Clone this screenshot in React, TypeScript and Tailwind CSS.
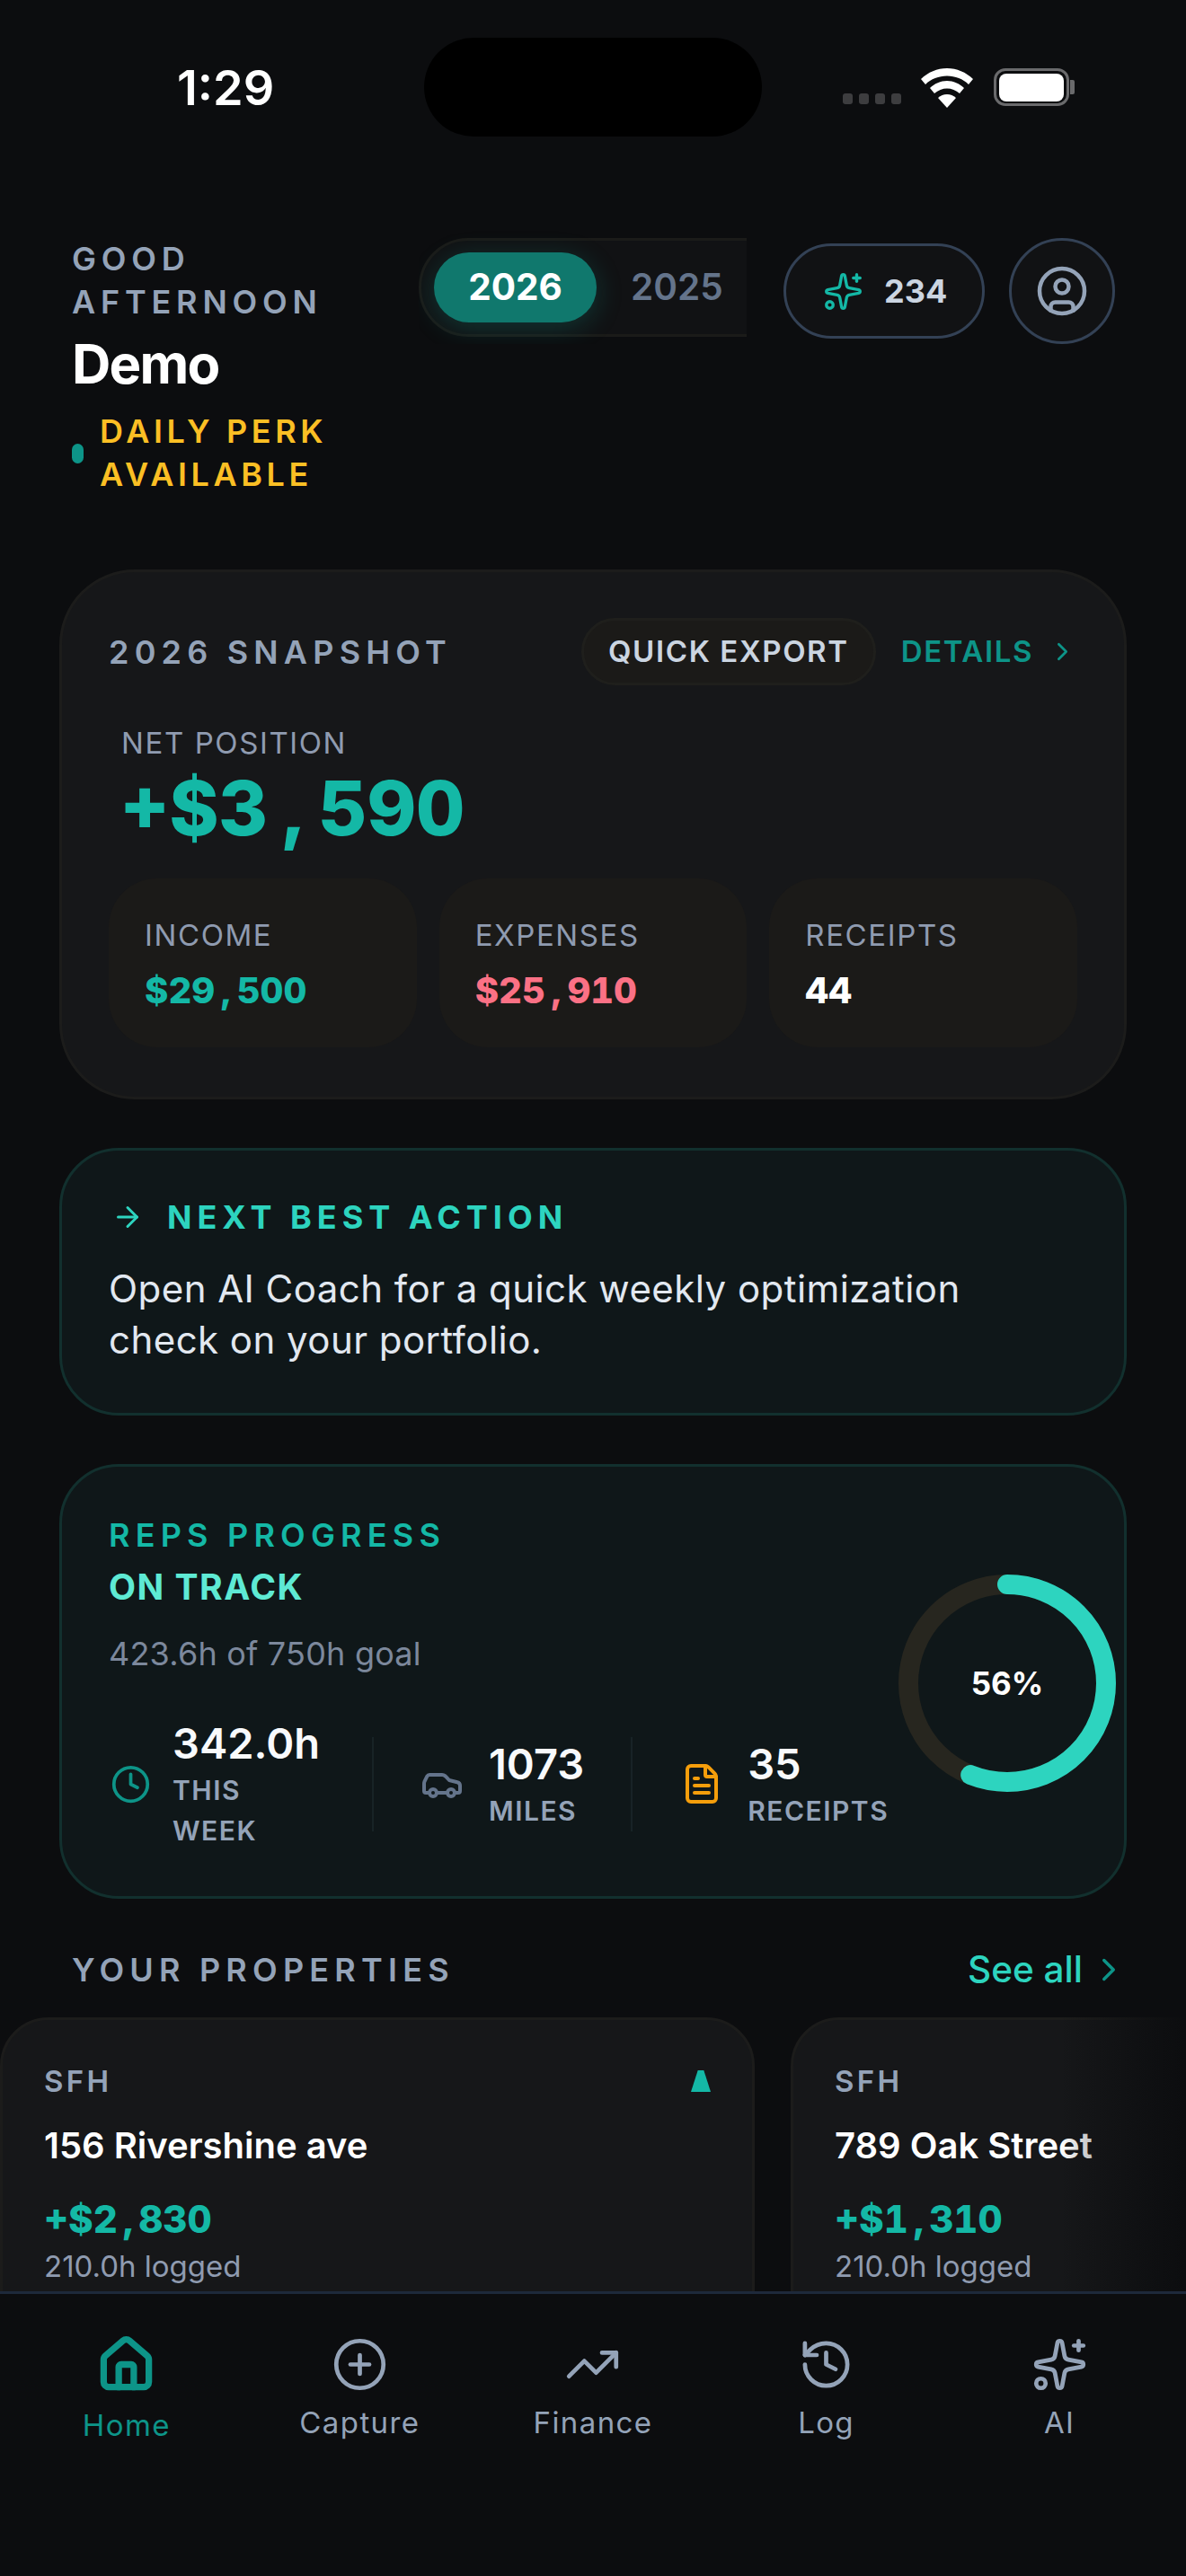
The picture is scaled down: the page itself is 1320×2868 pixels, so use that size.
import { ArrowRight, Car, ChevronRight, CirclePlus, CircleUser, Clock, FileText, History, House, Sparkles, TrendingUp } from 'lucide-react';

// amounts keep the wide comma gap from the design
function Money({ value, comma }: { value: string; comma: string }) {
  const [head, tail] = value.split(',');
  return (
    <>
      {head}
      {tail && <span className={comma}>,</span>}
      {tail}
    </>
  );
}

function StatCard({ label, value, color }: { label: string; value: string; color: string }) {
  return (
    <div className="flex-1 h-[188px] rounded-[54px] bg-[#1b1a18] pl-[40px] pt-[39px]">
      <div className="text-[33px] leading-[48px] tracking-[1.6px] text-[#8f9bb0]">{label}</div>
      <div className={`mt-[11px] text-[40px] leading-[54px] font-extrabold tabular-nums ${color}`}>
        <Money value={value} comma="mx-[7px]" />
      </div>
    </div>
  );
}

function RepStat({ icon, value, label, wide, gap }: { icon: React.ReactNode; value: string; label: string; wide?: boolean; gap: string }) {
  return (
    <div className={`flex items-center ${gap}`}>
      {icon}
      <div className={wide ? 'w-[170px]' : ''}>
        <div className="text-[47px] leading-[60px] font-semibold text-[#f8fafc]">{value}</div>
        <div className="text-[30px] leading-[45px] font-semibold tracking-[1.5px] text-[#94a3b8]">{label}</div>
      </div>
    </div>
  );
}

function PropertyCard({ name, value, arrow }: { name: string; value: string; arrow?: boolean }) {
  return (
    <div className="relative w-[840px] h-[400px] shrink-0 rounded-[54px] border-[3px] border-[#1c1c1b] bg-[#161719] px-[46px] pt-[47px]">
      <div className="flex items-center justify-between">
        <span className="text-[33px] leading-[42px] font-semibold tracking-[3.300px] text-[#94a3b8]">SFH</span>
        {arrow && <div className="h-[24px] w-[22px] bg-[#14b8a6] [clip-path:polygon(35%_0,65%_0,100%_100%,0_100%)]" />}
      </div>
      <div className="mt-[24px] text-[40px] leading-[54px] font-semibold text-white">{name}</div>
      <div className="mt-[28px] text-[42px] leading-[54px] font-extrabold tabular-nums text-[#14b8a6]">
        <Money value={value} comma="mx-[6px]" />
      </div>
      <div className="mt-[1px] text-[33px] leading-[48px] text-[#8f9bb0]">210.0h logged</div>
    </div>
  );
}

function NavItem({ icon, label, active }: { icon: React.ReactNode; label: string; active?: boolean }) {
  return (
    <div className="flex flex-1 flex-col items-center">
      <div className="flex h-[72px] items-center justify-center">{icon}</div>
      <div className={`${active ? 'mt-[8px] text-[#0d9488]' : 'mt-[5px] text-[#94a3b8]'} text-[33px] leading-[48px] tracking-[1.400px]`}>{label}</div>
    </div>
  );
}

export default function App() {
  return (
    <div className='flex h-[2868px] w-[1320px] flex-col overflow-hidden bg-[#0c0d0f] font-["Inter",sans-serif]'>
      <main className="relative flex-1 overflow-hidden">
        {/* status bar */}
        <div className="relative h-[265px]">
          <div className="absolute left-[197px] top-[64px] text-[54px] leading-[68px] font-semibold text-white">1:29</div>
          <div className="absolute left-[472px] top-[42px] h-[110px] w-[376px] rounded-[55px] bg-black" />
          <div className="absolute left-[938px] top-[104px] flex gap-[7px]">
            <div className="h-[12px] w-[11px] rounded-[3px] bg-[#3d3d3f]" />
            <div className="h-[12px] w-[11px] rounded-[3px] bg-[#3d3d3f]" />
            <div className="h-[12px] w-[11px] rounded-[3px] bg-[#3d3d3f]" />
            <div className="h-[12px] w-[11px] rounded-[3px] bg-[#3d3d3f]" />
          </div>
          <svg className="absolute left-[1025px] top-[76px]" width="58" height="44" viewBox="0 0 58 44" fill="white">
            <path d="M29 0C18 0 8 4.400 0 12l5 6C11 12 20 8.500 29 8.500S47 12 53 18l5-6C50 4.400 40 0 29 0Z" />
            <path d="M29 14c-7 0-14 3-19 8l5 6c4-3.500 9-5.500 14-5.500s10 2 14 5.500l5-6c-5-5-12-8-19-8Z" />
            <path d="M29 29c-4 0-7 1.500-10 4l10 11 10-11c-3-2.500-6-4-10-4Z" />
          </svg>
          <div className="absolute left-[1106px] top-[76px] flex items-center">
            <div className="flex h-[42px] w-[84px] items-center justify-center rounded-[13px] border-[3px] border-[#6a6a6c]">
              <div className="h-[31px] w-[72px] rounded-[8px] bg-white" />
            </div>
            <div className="ml-[1px] h-[16px] w-[5px] rounded-r-[2px] bg-[#6a6a6c]" />
          </div>
        </div>

        {/* header */}
        <div className="flex h-[369px] items-start pl-[80px]">
          <div className="w-[386px]">
            <div className="w-[320px] text-[36px] leading-[47.500px] font-semibold tracking-[5.800px] text-[#94a3b8]">GOOD AFTERNOON</div>
            <div className="mt-[9px] text-[60px] leading-[72px] font-bold tracking-[-1.800px] text-white">Demo</div>
            <div className="mt-[16px] flex items-center gap-[18px]">
              <div className="h-[22px] w-[13px] rounded-full bg-[#0d9488]" />
              <div className="w-[300px] text-[36px] leading-[47.500px] font-semibold tracking-[4.600px] text-[#fbbf24]">DAILY PERK AVAILABLE</div>
            </div>
          </div>
          <div className="w-[365px] shrink-0 overflow-hidden py-[8px] -my-[8px]">
            <div className="flex h-[110px] w-[430px] items-center rounded-full border-[3px] border-[#1b1b19] bg-[#111214] pl-[14px]">
              <div className="flex h-[78px] w-[181px] items-center justify-center rounded-[39px] bg-[#10786d] text-[40.500px] leading-none font-bold text-white shadow-[0_6px_30px_rgba(20,184,166,0.22)]">2026</div>
              <div className="ml-[38px] text-[40.500px] leading-none font-semibold text-[#64748b]">2025</div>
            </div>
          </div>
          <div className="ml-[41px] mt-[6px] flex h-[106px] w-[224px] items-center gap-[23px] rounded-full border-[3px] border-[#334155] bg-[#111214] pl-[41px]">
            <Sparkles className="h-[45px] w-[45px] text-[#14b8a6]" strokeWidth={1.8} />
            <span className="text-[36px] leading-none font-bold text-[#cbd5e1]">234</span>
          </div>
          <div className="ml-[27px] flex h-[118px] w-[118px] items-center justify-center rounded-full border-[3px] border-[#334155] bg-[#111214]">
            <CircleUser className="h-[60px] w-[60px] text-[#94a3b8]" strokeWidth={1.8} />
          </div>
        </div>

        {/* snapshot */}
        <section className="mx-[66px] h-[590px] rounded-[84px] border-[3px] border-[#1c1c1b] bg-[#161719] px-[52px] pt-[51px]">
          <div className="flex items-center">
            <span className="text-[36px] leading-[48px] font-semibold tracking-[6.200px] text-[#94a3b8]">2026 SNAPSHOT</span>
            <div className="ml-auto flex h-[75px] w-[328px] items-center justify-center rounded-full border-[3px] border-[#1f1f1c] bg-[#1b1a18] text-[33px] leading-none font-semibold tracking-[1.600px] text-[#cbd5e1]">QUICK EXPORT</div>
            <div className="ml-[28px] flex items-center gap-[16px]">
              <span className="text-[33px] leading-none font-semibold tracking-[1.600px] text-[#0d9488]">DETAILS</span>
              <ChevronRight className="h-[33px] w-[33px] text-[#0d9488]" strokeWidth={2} />
            </div>
          </div>
          <div className="ml-[14px] mt-[40px] text-[33px] leading-[48px] tracking-[1.600px] text-[#8f9bb0]">NET POSITION</div>
          <div className="ml-[13px] -mt-[1px] text-[84px] leading-[100px] font-extrabold tabular-nums text-[#14b8a6]">
            <Money value="+$3,590" comma="mx-[17px]" />
          </div>
          <div className="mt-[28px] flex gap-[25px]">
            <StatCard label="INCOME" value="$29,500" color="text-[#14b8a6]" />
            <StatCard label="EXPENSES" value="$25,910" color="text-[#fb7185]" />
            <StatCard label="RECEIPTS" value="44" color="text-white" />
          </div>
        </section>

        {/* next best action */}
        <section className="mx-[66px] mt-[54px] h-[298px] rounded-[66px] border-[3px] border-[#12302e] bg-[#0f1719] pl-[52px] pr-[90px] pt-[50px]">
          <div className="flex items-center gap-[26px] pl-[3px]">
            <ArrowRight className="h-[36px] w-[36px] text-[#2dd4bf]" strokeWidth={2} />
            <span className="text-[36px] leading-[48px] font-bold tracking-[6px] text-[#2dd4bf]">NEXT BEST ACTION</span>
          </div>
          <p className="mt-[27px] text-[42px] leading-[57px] tracking-[0.450px] text-[#e2e8f0]">Open AI Coach for a quick weekly optimization check on your portfolio.</p>
        </section>

        {/* reps */}
        <section className="relative mx-[66px] mt-[54px] h-[484px] rounded-[66px] border-[3px] border-[#12302e] bg-[#0f1719] pl-[52px] pt-[52px]">
          <div className="text-[36px] leading-[48px] font-semibold tracking-[6.200px] text-[#14b8a6]">REPS PROGRESS</div>
          <div className="mt-[7px] text-[39px] leading-[54px] font-bold tracking-[1.500px] text-[#5eead4]">ON TRACK</div>
          <div className="mt-[23px] text-[36px] leading-[48px] tracking-[0.200px] text-[#7c889c]">423.6h of 750h goal</div>
          <div className="ml-[2px] mt-[46px] flex items-center">
            <RepStat icon={<Clock className="h-[45px] w-[45px] text-[#0d9488]" strokeWidth={2} />} value="342.0h" label="THIS WEEK" wide gap="gap-[24px]" />
            <div className="ml-[52px] mr-[52px] h-[105px] w-[2px] bg-[#182326]" />
            <RepStat icon={<Car className="h-[48px] w-[48px] text-[#64748b]" strokeWidth={2} />} value="1073" label="MILES" gap="gap-[28px]" />
            <div className="ml-[52px] mr-[53px] h-[105px] w-[2px] bg-[#182326]" />
            <RepStat icon={<FileText className="h-[48px] w-[48px] text-[#f59e0b]" strokeWidth={2} />} value="35" label="RECEIPTS" gap="gap-[27px]" />
          </div>
          {/* progress ring */}
          <div className="absolute left-[931px] top-[120px] flex h-[242px] w-[242px] items-center justify-center">
            <svg className="absolute inset-0" width="242" height="242" viewBox="0 0 242 242">
              <circle cx="121" cy="121" r="110" fill="none" stroke="#27261f" strokeWidth="22" />
              <circle cx="121" cy="121" r="110" fill="none" stroke="#2dd4bf" strokeWidth="22" strokeLinecap="round" strokeDasharray="387 691" transform="rotate(-90 121 121)" />
            </svg>
            <span className="text-[35px] leading-none font-bold text-white">56%</span>
          </div>
        </section>

        {/* properties */}
        <div className="mt-[55px] flex items-center justify-between pl-[80px] pr-[65px]">
          <span className="text-[36px] leading-[48px] font-semibold tracking-[6.200px] text-[#94a3b8]">YOUR PROPERTIES</span>
          <div className="flex items-center gap-[8px]">
            <span className="text-[40.500px] leading-[48px] font-medium text-[#2dd4bf]">See all</span>
            <ChevronRight className="h-[42px] w-[42px] text-[#0d9488]" strokeWidth={2} />
          </div>
        </div>
        <div className="relative mt-[29px] flex gap-[40px]">
          <PropertyCard name="156 Rivershine ave" value="+$2,830" arrow />
          <PropertyCard name="789 Oak Street" value="+$1,310" />
          <div className="absolute right-0 top-0 h-full w-[140px] bg-gradient-to-r from-transparent to-[#0c0d0f]" />
        </div>
      </main>

      {/* tab bar */}
      <nav className="flex h-[317px] shrink-0 items-start border-t-[3px] border-[#1e293b] bg-[#0c0d0f] px-[11px] pt-[42px]">
        <NavItem icon={<House className="h-[67px] w-[67px] text-[#0d9488]" strokeWidth={2.6} />} label="Home" active />
        <NavItem icon={<CirclePlus className="h-[63px] w-[63px] text-[#94a3b8]" strokeWidth={1.8} />} label="Capture" />
        <NavItem icon={<TrendingUp className="h-[63px] w-[63px] text-[#94a3b8]" strokeWidth={1.8} />} label="Finance" />
        <NavItem icon={<History className="h-[63px] w-[63px] text-[#94a3b8]" strokeWidth={1.8} />} label="Log" />
        <NavItem icon={<Sparkles className="h-[63px] w-[63px] text-[#94a3b8]" strokeWidth={1.8} />} label="AI" />
      </nav>
    </div>
  );
}
